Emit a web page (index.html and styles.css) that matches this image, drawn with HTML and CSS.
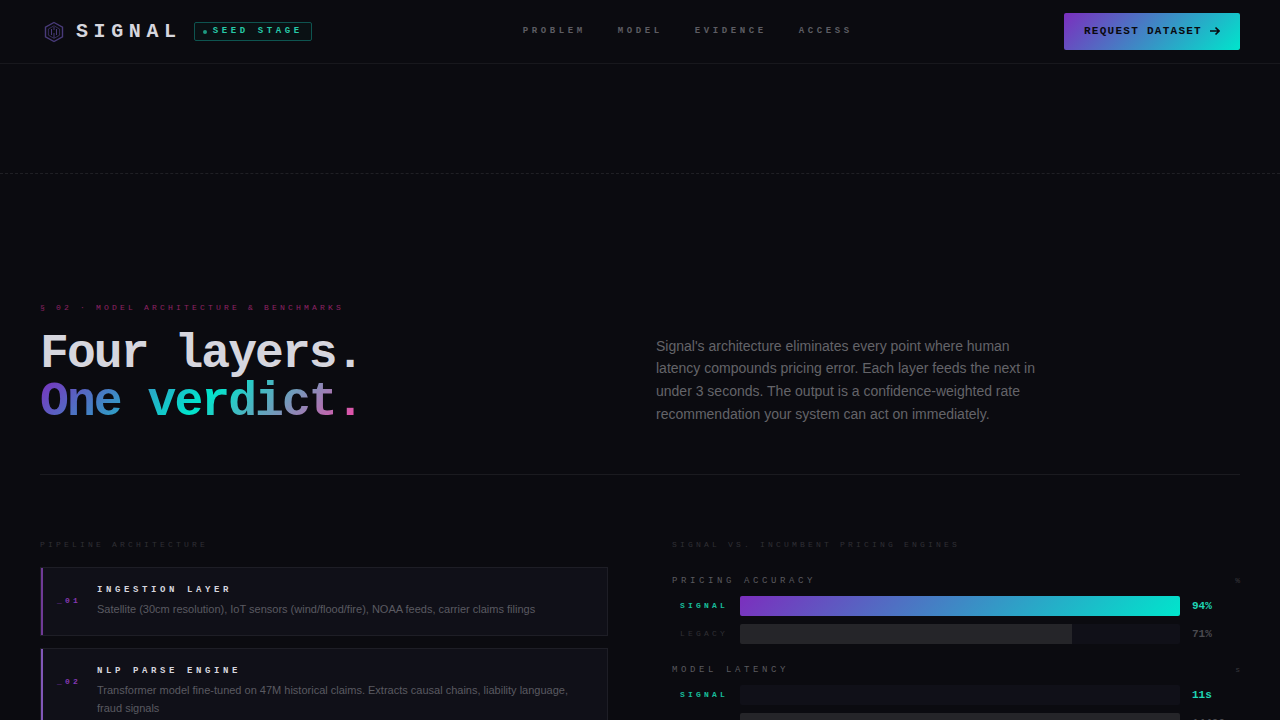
FILE: index.html
```
<!DOCTYPE html>
<html lang="en">
<head>
    <meta charset="UTF-8">
    <meta name="viewport" content="width=device-width, initial-scale=1.0">
    <title>Signal</title>
    <link rel="stylesheet" href="styles.css">
</head>
<body>

    <header class="navbar">
        <div class="brand">
            <svg class="logo" viewBox="0 0 28 28" fill="none" stroke="#493b7a">
                <path d="M14 4.5 22.5 9.2v9.6L14 23.5 5.5 18.8V9.2z" stroke-width="1.4"/>
                <path d="M14 7.8 19.6 11v6.2L14 20.4 8.4 17.2V11z" stroke-width=".7"/>
                <path d="M11.5 11v6M14 9v3M14 15v5M16.5 11v6" stroke-width="1"/>
            </svg>
            <span class="brand-name">SIGNAL</span>
            <span class="badge"><i class="dot"></i>SEED STAGE</span>
        </div>
        <nav class="nav-links">
            <a href="#problem">PROBLEM</a>
            <a href="#model">MODEL</a>
            <a href="#evidence">EVIDENCE</a>
            <a href="#access">ACCESS</a>
        </nav>
        <a class="cta" href="#access">
            <span>REQUEST DATASET</span>
            <svg viewBox="0 0 10 10" fill="none" stroke="#0a0a0f" stroke-width="1.6"><path d="M0 5h9M5.5 1.5 9 5 5.5 8.5"/></svg>
        </a>
    </header>

    <div class="spacer"></div>

    <section class="model" id="model">
        <div class="section-head">
            <div>
                <p class="eyebrow">§ 02 · MODEL ARCHITECTURE &amp; BENCHMARKS</p>
                <h2>Four layers.<br><span class="gradient-text">One verdict.</span></h2>
            </div>
            <p class="lead">Signal's architecture eliminates every point where human latency compounds pricing error. Each layer feeds the next in under 3 seconds. The output is a confidence-weighted rate recommendation your system can act on immediately.</p>
        </div>

        <div class="columns">
            <div>
                <p class="col-label">PIPELINE ARCHITECTURE</p>
                <div class="layer">
                    <span class="num">_01</span>
                    <div>
                        <h3>INGESTION LAYER</h3>
                        <p>Satellite (30cm resolution), IoT sensors (wind/flood/fire), NOAA feeds, carrier claims filings</p>
                    </div>
                </div>
                <div class="layer layer-2">
                    <span class="num">_02</span>
                    <div>
                        <h3>NLP PARSE ENGINE</h3>
                        <p>Transformer model fine-tuned on 47M historical claims. Extracts causal chains, liability language, fraud signals</p>
                    </div>
                </div>
            </div>

            <div>
                <p class="col-label">SIGNAL VS. INCUMBENT PRICING ENGINES</p>
                <div class="metric">
                    <div class="metric-head"><span>PRICING ACCURACY</span><span class="unit">%</span></div>
                    <div class="bar-row signal">
                        <span class="name">SIGNAL</span>
                        <div class="track"><div class="fill" style="width: 100%"></div></div>
                        <span class="value">94%</span>
                    </div>
                    <div class="bar-row legacy">
                        <span class="name">LEGACY</span>
                        <div class="track"><div class="fill" style="width: 75.5%"></div></div>
                        <span class="value">71%</span>
                    </div>
                </div>
                <div class="metric">
                    <div class="metric-head"><span>MODEL LATENCY</span><span class="unit">s</span></div>
                    <div class="bar-row signal">
                        <span class="name">SIGNAL</span>
                        <div class="track"><div class="fill" style="width: 0%"></div></div>
                        <span class="value">11s</span>
                    </div>
                    <div class="bar-row legacy">
                        <span class="name">LEGACY</span>
                        <div class="track"><div class="fill" style="width: 100%"></div></div>
                        <span class="value">14400</span>
                    </div>
                </div>
            </div>
        </div>
    </section>

</body>
</html>
```
FILE: styles.css
```
* {
    margin: 0;
    padding: 0;
    box-sizing: border-box;
}

body {
    height: 720px;
    overflow: hidden;
    background: #0b0b10;
    color: #d6d6de;
    font-family: "Liberation Sans", Arial, sans-serif;
}

a {
    text-decoration: none;
}

/* Navbar */
.navbar {
    height: 64px;
    padding: 0 40px;
    display: flex;
    justify-content: space-between;
    align-items: center;
    border-bottom: 1px solid #18181d;
    font-family: "Liberation Mono", monospace;
    font-weight: bold;
}

.brand {
    display: flex;
    align-items: center;
}

.logo {
    width: 28px;
    height: 28px;
    margin-right: 8px;
}

.brand-name {
    font-size: 20px;
    letter-spacing: 0.28em;
    margin-right: 12px;
}

.badge {
    display: flex;
    align-items: center;
    height: 19px;
    padding: 0 8px 2px;
    border: 1px solid #0e5450;
    border-radius: 2px;
    background: #0a1114;
    color: #27c9a8;
    font-size: 9px;
    letter-spacing: 0.4em;
}

.dot {
    width: 4px;
    height: 4px;
    margin: 3px 6px 0 0;
    border-radius: 50%;
    background: #1d9a80;
}

.nav-links {
    display: flex;
    gap: 32px;
    padding-bottom: 2px;
}

.nav-links a {
    color: #5d5d63;
    font-size: 9px;
    letter-spacing: 0.4em;
}

.cta {
    display: flex;
    align-items: center;
    justify-content: space-between;
    width: 176px;
    height: 37px;
    padding: 0 20px 2px;
    border-radius: 2px;
    background: linear-gradient(135deg, #7b2fbe, #00e5cc);
    color: #0a0a0f;
    font-size: 11px;
    letter-spacing: 0.115em;
    white-space: nowrap;
}

.cta svg {
    width: 10px;
    height: 10px;
    flex-shrink: 0;
}

.spacer {
    height: 109px;
}

/* Model section */
.model {
    padding: 128px 40px 0;
    border-top: 1px dashed #202025;
}

.section-head {
    display: grid;
    grid-template-columns: 1fr 1fr;
    gap: 32px;
    align-items: end;
    height: 173px;
    padding-bottom: 48px;
    border-bottom: 1px solid #1b1b20;
}

.eyebrow,
.col-label {
    font-family: "Liberation Mono", monospace;
    font-size: 8px;
    line-height: 12px;
    letter-spacing: 0.4em;
}

.eyebrow {
    color: #8d2364;
    margin-bottom: 16px;
}

h2 {
    font-family: "Liberation Mono", monospace;
    font-size: 48px;
    line-height: 48px;
    letter-spacing: -0.04em;
}

.gradient-text {
    display: inline-block;
    background: linear-gradient(135deg, #7b2fbe, #00e5cc 50%, #ff3ea5);
    -webkit-background-clip: text;
    background-clip: text;
    color: transparent;
}

.lead {
    max-width: 380px;
    margin-bottom: 0.5px;
    color: #646469;
    font-size: 14px;
    line-height: 22.7px;
}

.columns {
    display: grid;
    grid-template-columns: 1fr 1fr;
    gap: 64px;
    padding-top: 64px;
}

.col-label {
    color: #303035;
}

/* Pipeline cards */
.layer {
    display: grid;
    grid-template-columns: 24px 1fr;
    gap: 16px;
    align-items: start;
    min-height: 69px;
    margin-top: 12px;
    padding: 15px 16px;
    border: 1px solid #1e1e26;
    box-shadow: inset 2px 0 #6f3a96;
    background: #101018;
}

.col-label + .layer {
    margin-top: 16px;
}

.layer-2 {
    box-shadow: inset 2px 0 #8157b8;
}

.num {
    margin-top: 12px;
    color: #8438b3;
    font-family: "Liberation Mono", monospace;
    font-size: 8px;
    line-height: 12px;
    font-weight: bold;
    letter-spacing: 0.4em;
}

.layer h3 {
    font-family: "Liberation Mono", monospace;
    font-size: 9px;
    line-height: 14px;
    letter-spacing: 0.4em;
    margin-bottom: 4px;
}

.layer p {
    color: #5a5a61;
    font-size: 11px;
    line-height: 17.6px;
}

/* Benchmarks */
.metric {
    margin-top: 19px;
    font-family: "Liberation Mono", monospace;
}

.col-label + .metric {
    margin-top: 23px;
}

.metric-head {
    display: flex;
    justify-content: space-between;
    align-items: center;
    height: 14px;
    color: #5a5a5f;
    font-size: 9px;
    letter-spacing: 0.4em;
}

.unit {
    padding-bottom: 2px;
    color: #38383d;
    font-size: 8px;
    letter-spacing: 0;
}

.bar-row {
    display: grid;
    grid-template-columns: 56px 1fr 48px;
    gap: 12px;
    align-items: center;
    height: 20px;
    margin-top: 8px;
}

.name {
    padding-bottom: 2px;
    text-align: right;
    font-size: 8px;
    letter-spacing: 0.4em;
}

.track {
    height: 20px;
    border-radius: 2px;
    background: #101018;
    overflow: hidden;
}

.fill {
    height: 100%;
}

.value {
    font-size: 11px;
    font-weight: bold;
}

.signal .name {
    color: #18bd9a;
    font-weight: bold;
}

.signal .value {
    color: #1fd6b5;
}

.signal .fill {
    background: linear-gradient(135deg, #7b2fbe, #00e5cc);
}

.legacy .name {
    color: #303035;
}

.legacy .value {
    color: #4a4a4f;
}

.legacy .fill {
    background: #252529;
}
```
